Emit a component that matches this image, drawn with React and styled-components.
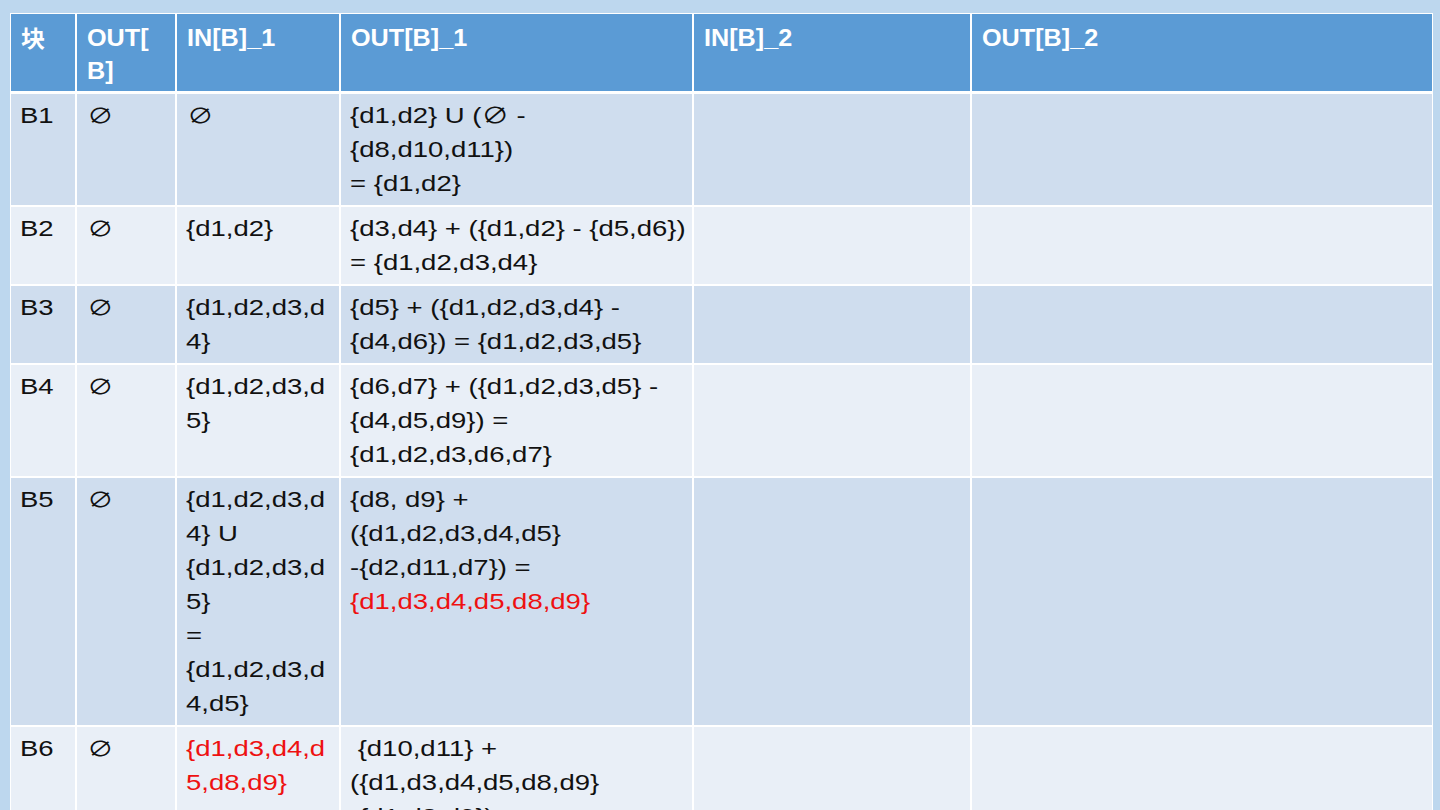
import React from "react";
import styled, { createGlobalStyle } from "styled-components";

const Global = createGlobalStyle`
  html, body {
    margin: 0;
    padding: 0;
    background: #bdd7ee;
    width: 1440px;
    height: 810px;
    overflow: hidden;
  }
  body {
    font-family: "Liberation Sans", Arial, "Noto Sans CJK SC", sans-serif;
  }
`;

const Slide = styled.div`
  width: 1440px;
  height: 810px;
  padding: 13px 0 0 10px;
  box-sizing: border-box;
  overflow: hidden;
`;

const Table = styled.div`
  width: 1423px;
  padding: 1px;
  box-sizing: border-box;
  background: #ffffff;
  display: flex;
  flex-direction: column;
  gap: 2px;
`;

const Row = styled.div`
  display: grid;
  grid-template-columns: 64px 98px 162px 351px 276px 1fr;
  gap: 2px;
  margin-bottom: ${(p) => (p.$head ? "1px" : "0")};
`;

const Cell = styled.div`
  background: ${(p) => (p.$head ? "#5b9bd5" : p.$odd ? "#cfddee" : "#e9eff7")};
  padding: ${(p) => (p.$head ? "7px 0 4px 10px" : "5px 0 4px 9px")};
  overflow: hidden;
`;

const Line = styled.span`
  display: block;
  height: ${(p) => (p.$head ? "33px" : "34px")};
  white-space: pre;
  transform-origin: 0 0;
  font-size: ${(p) => (p.$head ? "24px" : "22px")};
  line-height: ${(p) => (p.$head ? "33px" : "34px")};
  font-weight: ${(p) => (p.$head ? 700 : 400)};
  color: ${(p) => (p.$head ? "#ffffff" : p.$red ? "#ee1111" : "#111111")};
  transform: scaleX(${(p) => (p.$head ? 1.05 : 1.25)});
`;

const Empty = styled.span`
  margin-left: 1px;
  font-size: 21px;
`;

const Cjk = styled.span`
  font-family: "Noto Sans CJK SC", sans-serif;
  font-weight: 700;
  font-size: 23px;
`;

const header = [["块"], ["OUT[", "B]"], ["IN[B]_1"], ["OUT[B]_1"], ["IN[B]_2"], ["OUT[B]_2"]];

const R = (text) => ({ text, red: true });

const rows = [
  [["B1"], ["∅"], ["∅"], ["{d1,d2} U (∅ -", "{d8,d10,d11})", "= {d1,d2}"], [], []],
  [["B2"], ["∅"], ["{d1,d2}"], ["{d3,d4} + ({d1,d2} - {d5,d6})", "= {d1,d2,d3,d4}"], [], []],
  [["B3"], ["∅"], ["{d1,d2,d3,d", "4}"], ["{d5} + ({d1,d2,d3,d4} -", "{d4,d6}) = {d1,d2,d3,d5}"], [], []],
  [["B4"], ["∅"], ["{d1,d2,d3,d", "5}"], ["{d6,d7} + ({d1,d2,d3,d5} -", "{d4,d5,d9}) =", "{d1,d2,d3,d6,d7}"], [], []],
  [
    ["B5"],
    ["∅"],
    ["{d1,d2,d3,d", "4} U", "{d1,d2,d3,d", "5}", "=", "{d1,d2,d3,d", "4,d5}"],
    ["{d8, d9} +", "({d1,d2,d3,d4,d5}", "-{d2,d11,d7}) =", R("{d1,d3,d4,d5,d8,d9}")],
    [],
    [],
  ],
  [
    ["B6"],
    ["∅"],
    [R("{d1,d3,d4,d"), R("5,d8,d9}")],
    [" {d10,d11} +", "({d1,d3,d4,d5,d8,d9}", "-{d1,d8,d9}) ="],
    [],
    [],
  ],
];

function CellLines({ lines, head }) {
  return lines.map((l, i) => {
    const item = typeof l === "string" ? { text: l } : l;
    let content = item.text;
    if (item.text === "块") content = <Cjk>块</Cjk>;
    else if (item.text === "∅") content = <Empty>∅</Empty>;
    return (
      <Line key={i} $head={head} $red={item.red}>
        {content}
      </Line>
    );
  });
}

export default function App() {
  return (
    <>
      <Global />
      <Slide>
        <Table>
          <Row $head>
            {header.map((c, i) => (
              <Cell key={i} $head>
                <CellLines lines={c} head />
              </Cell>
            ))}
          </Row>
          {rows.map((r, ri) => (
            <Row key={ri}>
              {r.map((c, ci) => (
                <Cell key={ci} $odd={ri % 2 === 0}>
                  <CellLines lines={c} />
                </Cell>
              ))}
            </Row>
          ))}
        </Table>
      </Slide>
    </>
  );
}
